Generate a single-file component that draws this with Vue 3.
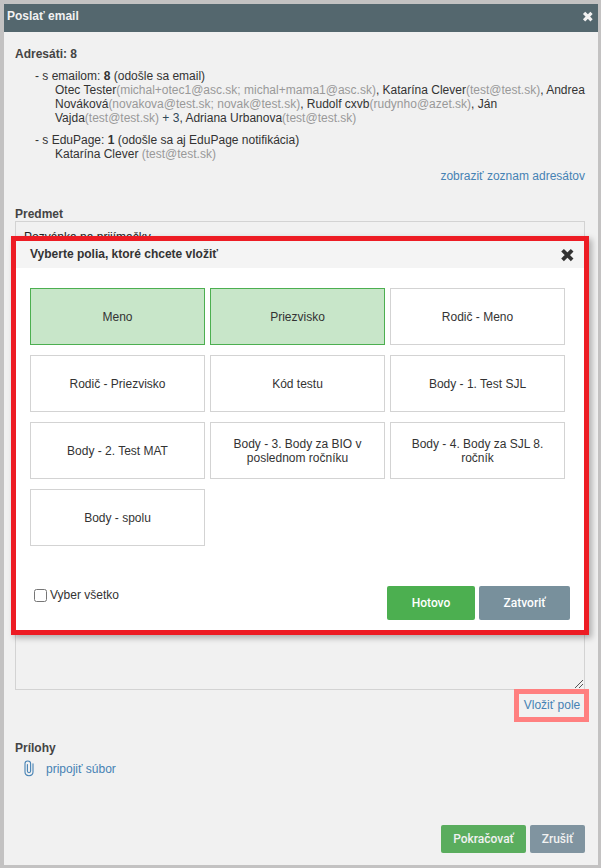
<script setup>
import { ref } from 'vue'

const fields = ref([
  { label: 'Meno', selected: true },
  { label: 'Priezvisko', selected: true },
  { label: 'Rodič - Meno', selected: false },
  { label: 'Rodič - Priezvisko', selected: false },
  { label: 'Kód testu', selected: false },
  { label: 'Body - 1. Test SJL', selected: false },
  { label: 'Body - 2. Test MAT', selected: false },
  { label: 'Body - 3. Body za BIO v poslednom ročníku', selected: false },
  { label: 'Body - 4. Body za SJL 8. ročník', selected: false },
  { label: 'Body - spolu', selected: false },
])
const subject = ref('Pozvánka na prijímačky')
const all = ref(false)
</script>

<template>
  <div class="page">
    <div class="window">
      <header class="bar">
        <span class="bar-title">Poslať email</span>
        <svg class="bar-close" viewBox="0 0 12 12"><path d="M3.2 3 8.4 8.2M8.4 3 3.2 8.2" /></svg>
      </header>
      <main class="content">
        <h2 class="label">Adresáti: 8</h2>
        <section class="group">
          <div>- s emailom: <b>8</b> (odošle sa email)</div>
          <div class="people">
            <div>Otec Tester<i>(michal+otec1@asc.sk; michal+mama1@asc.sk)</i>, Katarína Clever<i>(test@test.sk)</i>, Andrea</div>
            <div>Nováková<i>(novakova@test.sk; novak@test.sk)</i>, Rudolf cxvb<i>(rudynho@azet.sk)</i>, Ján</div>
            <div>Vajda<i>(test@test.sk)</i> <span class="more">+ 3</span>, Adriana Urbanova<i>(test@test.sk)</i></div>
          </div>
        </section>
        <section class="group">
          <div>- s EduPage: <b>1</b> (odošle sa aj EduPage notifikácia)</div>
          <div class="people">Katarína Clever <i>(test@test.sk)</i></div>
        </section>
        <div class="show"><a>zobraziť zoznam adresátov</a></div>
        <h2 class="label">Predmet</h2>
        <input v-model="subject" class="subject" />
        <div class="message">
          <svg class="grip" viewBox="0 0 8 8"><path d="M0 8 8 0M4 8 8 4" /></svg>
        </div>
        <div class="insert"><a class="insert-link">Vložiť pole</a></div>
        <h2 class="label attachments">Prílohy</h2>
        <a class="attach">
          <svg class="clip" viewBox="0 0 10 17"><path d="M3.4 4.5v6.6a1.5 1.5 0 0 0 3.2 0V3.5C6.6 .2 1 .2 1 3.5v8.6c0 4.8 8 4.8 8 0V3.8" /></svg>
          <span>pripojiť súbor</span>
        </a>
        <footer class="actions">
          <button class="btn green small">Pokračovať</button>
          <button class="btn gray small cancel">Zrušiť</button>
        </footer>
      </main>
    </div>

    <div class="modal">
      <header class="modal-head">
        <span>Vyberte polia, ktoré chcete vložiť</span>
        <svg class="modal-close" viewBox="0 0 14 14"><path d="M3.9 3.6l6.9 6.9M10.8 3.6l-6.9 6.9" /></svg>
      </header>
      <div class="grid">
        <div
          v-for="f in fields"
          :key="f.label"
          class="card"
          :class="{ selected: f.selected }"
          @click="f.selected = !f.selected"
        >{{ f.label }}</div>
      </div>
      <div class="modal-foot">
        <label class="all"><input v-model="all" type="checkbox" /><span>Vyber všetko</span></label>
        <button class="btn green done">Hotovo</button>
        <button class="btn gray close">Zatvoriť</button>
      </div>
    </div>
  </div>
</template>

<style>
body {
  margin: 0;
}
</style>

<style scoped>
* {
  box-sizing: border-box;
}
.page {
  position: relative;
  width: 601px;
  height: 868px;
  padding: 4px 3px 3px 4px;
  background: #c3c2c2;
  font: 12px/14px "Liberation Sans", Arial, sans-serif;
  color: #333;
  overflow: hidden;
}
.window {
  display: flex;
  flex-direction: column;
  height: 861px;
  background: #f1f1f1;
}
.bar {
  display: flex;
  justify-content: space-between;
  height: 28px;
  padding: 5px 4px 0 3px;
  background: #54676e;
  color: #f1f1f1;
  font-weight: bold;
}
.bar-close {
  width: 12px;
  height: 12px;
  margin-top: 2px;
  fill: none;
  stroke: #f1f1f1;
  stroke-width: 3.2;
  stroke-linecap: square;
}
.content {
  flex: 1;
  display: flex;
  flex-direction: column;
  padding: 15px 13px 12px 11px;
}
.label {
  margin: 0;
  font: bold 12px/14px "Liberation Sans", Arial, sans-serif;
  color: #444;
}
.group {
  margin-top: 8px;
  padding-left: 20px;
  white-space: nowrap;
}
.people {
  padding-left: 20px;
}
.people i {
  font-style: normal;
  color: #999;
}
.more {
  color: #2f4858;
}
a {
  color: #4682b4;
}
.show {
  margin: 8px 0 24px;
  text-align: right;
}
.subject {
  height: 31px;
  padding: 0 8px;
  border: 1px solid #d3d3d3;
  background: transparent;
  font: 12px "Liberation Sans", Arial, sans-serif;
  color: #222;
}
.message {
  display: flex;
  align-items: flex-end;
  justify-content: flex-end;
  height: 428px;
  margin-top: 10px;
  padding: 1px;
  border: 1px solid #d3d3d3;
}
.grip {
  width: 8px;
  height: 8px;
  fill: none;
  stroke: #555;
  stroke-width: 1;
}
.insert {
  display: flex;
  justify-content: flex-end;
  height: 33px;
  margin: -1px -4px 0 0;
}
.insert-link {
  width: 75px;
  height: 33px;
  padding: 4px 0 0 1px;
  border: 5px solid #ff8080;
  line-height: 15px;
  text-align: center;
  white-space: nowrap;
}
.attachments {
  margin-top: 19px;
}
.attach {
  display: flex;
  align-items: center;
  gap: 12px;
  height: 17px;
  margin-top: 5px;
  padding-left: 9px;
}
.clip {
  width: 10px;
  height: 17px;
  fill: none;
  stroke: #4682b4;
  stroke-width: 1.1;
  stroke-linecap: round;
}
.actions {
  display: flex;
  justify-content: flex-end;
  gap: 4px;
  margin-top: auto;
}
.btn {
  height: 34px;
  padding: 0;
  border: 0;
  border-radius: 2px;
  color: #fff;
  font: 500 12px/14px Roboto, sans-serif;
}
.green {
  background: #4caf50;
}
.gray {
  background: #78909c;
}
.small {
  width: 85px;
  height: 28px;
  color: #f1f1f1;
}
.small.green {
  background: #5aad5e;
}
.small.gray {
  background: #8094a0;
}
.small.cancel {
  width: 55px;
}
.modal {
  position: absolute;
  left: 11px;
  top: 236px;
  width: 578px;
  height: 399px;
  border: 5px solid #ed1c24;
  background: #fff;
  box-shadow: 3px 3px 6px rgba(0, 0, 0, 0.28);
}
.modal-head {
  display: flex;
  justify-content: space-between;
  height: 27px;
  padding: 6px 10px 0 14px;
  background: #f4f4f4;
  font-weight: bold;
}
.modal-close {
  width: 14px;
  height: 14px;
  margin-top: 1px;
  fill: none;
  stroke: #333;
  stroke-width: 3.8;
  stroke-linecap: square;
}
.grid {
  display: grid;
  grid-template-columns: repeat(3, 175px);
  grid-auto-rows: 57px;
  gap: 10px 5px;
  padding: 20px 14px 0;
}
.card {
  display: flex;
  align-items: center;
  justify-content: center;
  padding: 0 18px;
  border: 1px solid #d3d3d3;
  text-align: center;
}
.card.selected {
  border-color: #4caf50;
  background: #c8e6c9;
}
.modal-foot {
  display: flex;
  padding: 40px 14px 0;
}
.all {
  display: flex;
  flex: 1;
  padding: 2px 0 0 4px;
}
.all input {
  width: 13px;
  height: 13px;
  margin: 1px 3px 0 0;
}
.done {
  width: 88px;
}
.close {
  width: 91px;
  margin-left: 4px;
}
</style>
